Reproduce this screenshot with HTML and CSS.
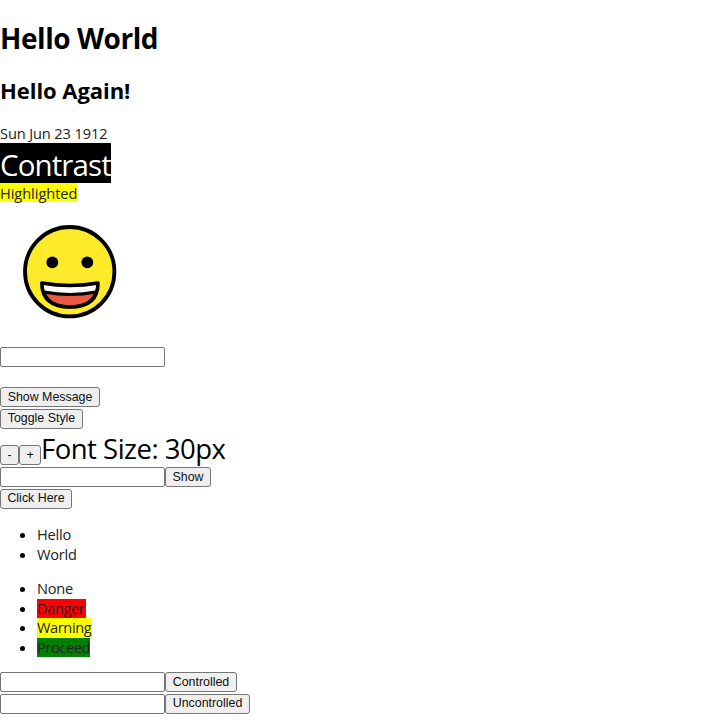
FILE: index.html
```
<!DOCTYPE html>
<html lang="en">
<head>
<meta charset="utf-8">
<title>Hello World</title>
<link rel="stylesheet" href="styles.css">
</head>
<body>
<h1>Hello World</h1>
<h2>Hello Again!</h2>
<div class="date">Sun Jun 23 1912</div>
<div class="contrast-row"><span class="contrast">Contrast</span></div>
<div class="row"><span class="highlight">Highlighted</span></div>
<svg class="face" viewBox="0 0 140 140">
<circle cx="69.7" cy="69.7" r="44.7" fill="#fcea2b" stroke="#000" stroke-width="3.8"/>
<circle cx="52.3" cy="60.3" r="5.9"/><circle cx="87.3" cy="60.3" r="5.9"/>
<path d="M41.8 81Q70 86 98 81Q98 105 70 105Q42 105 41.8 81Z" fill="#fff"/>
<path d="M44 90Q70 95 96 90Q91 105 70 105Q49 105 44 90Z" fill="#ea5a47" stroke="#000" stroke-width="3"/>
<path d="M41.8 81Q70 86 98 81Q98 105 70 105Q42 105 41.8 81Z" fill="none" stroke="#000" stroke-width="3.6" stroke-linejoin="round"/>
</svg>
<div class="field"><input></div>
<div class="controls"><button class="w100">Show Message</button></div>
<div class="controls"><button class="w83">Toggle Style</button></div>
<div class="sizer"><button class="w19">-</button><button class="w22">+</button><span>Font Size: 30px</span></div>
<div class="controls"><input><button class="w46">Show</button></div>
<div class="controls"><button class="w72">Click Here</button></div>
<ul><li>Hello</li><li>World</li></ul>
<ul><li>None</li><li><span class="danger">Danger</span></li><li><span class="highlight warning">Warning</span></li><li><span class="proceed">Proceed</span></li></ul>
<div class="controls"><input><button class="w72">Controlled</button></div>
<div class="controls"><input><button class="w85">Uncontrolled</button></div>
</body>
</html>
```
FILE: styles.css
```
* { box-sizing: border-box; }
body { margin: 0; height: 720px; overflow: hidden; background: #fff; color: #000; font: 14.6px/19.6px "Open Sans", "Noto Sans", sans-serif; letter-spacing: -.2px; }
h1 { margin: 19px 0 0; font-size: 28px; line-height: 39px; letter-spacing: -.45px; }
h2 { margin: 17px 0 0; font-size: 22px; line-height: 30px; letter-spacing: -.05px; }
.date { margin-top: 19px; height: 18.6px; color: #222; letter-spacing: -.12px; }
.contrast-row { height: 40px; }
.contrast { display: block; width: 111px; height: 40px; padding-top: 3px; background: #000; color: #fff; font-size: 29.5px; line-height: 37px; letter-spacing: -.9px; }
.row { height: 19.8px; }
.highlight, .danger, .proceed { display: inline-block; height: 19.5px; vertical-align: top; letter-spacing: -.4px; }
.highlight { width: 77px; background: #ff0; color: #222; letter-spacing: -.05px; }
.row .highlight { line-height: 21px; }
.warning { width: 55px; letter-spacing: -.4px; }
.danger { width: 48.5px; background: red; }
.proceed { width: 53px; background: green; }
.face { display: block; width: 140px; height: 140px; }
.field { height: 45px; padding-top: 5px; }
input { display: block; width: 165px; height: 20px; margin: 0; padding: 1px 2px; border: 1px solid #767676; border-radius: 2px; background: #fff; }
button { height: 20px; margin: 0; padding: 0; border: 1px solid #767676; border-radius: 3px; background: #efefef; color: #111; font: 12.4px/17px "Liberation Sans", sans-serif; white-space: nowrap; }
.controls { display: flex; height: 21.5px; }
.sizer { display: flex; align-items: flex-end; height: 37px; }
.sizer button { margin-bottom: 2px; }
.sizer span { font-size: 27.5px; line-height: 36px; letter-spacing: -.5px; }
ul { margin: 15px 0; padding-left: 37px; line-height: 19.5px; }
li { height: 19.5px; color: #222; }
li::marker { color: #000; }
.w19 { width: 19px; }
.w22 { width: 22px; }
.w46 { width: 46px; }
.w72 { width: 72px; }
.w83 { width: 83px; }
.w85 { width: 85px; }
.w100 { width: 100px; }
```
